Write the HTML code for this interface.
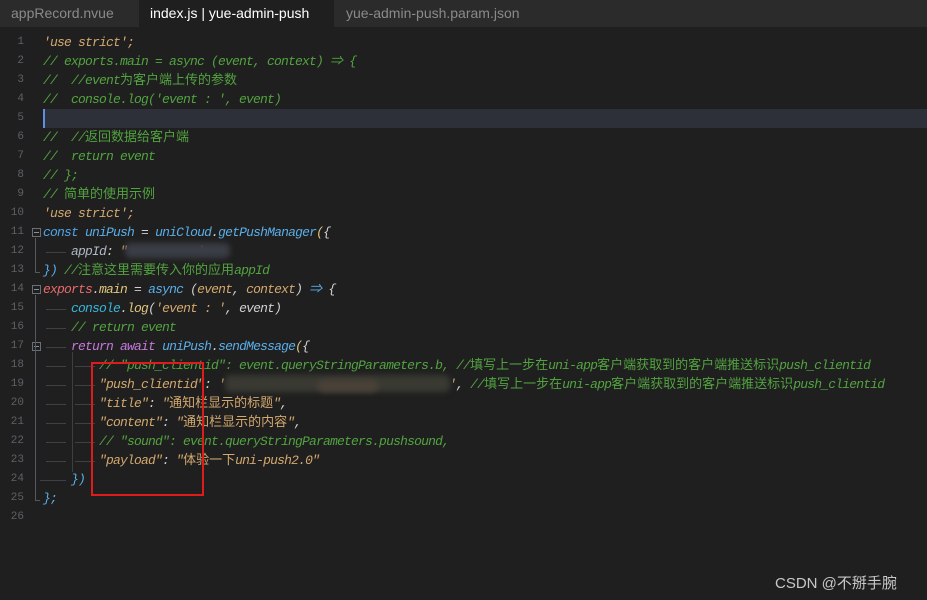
<!DOCTYPE html>
<html><head><meta charset="utf-8"><style>
body{margin:0;width:927px;height:600px;background:#1f1f1f;overflow:hidden;position:relative;font-family:"Liberation Mono","Noto Sans CJK SC",monospace;}
.tabs{position:absolute;left:0;top:0;width:927px;height:27px;background:#2b2b2b;font-family:"Liberation Sans","Noto Sans CJK SC",sans-serif;font-size:14px;}
.tab{position:absolute;top:0;height:27px;line-height:26px;color:#8a8a8a;}
.tab.act{background:#1f1f1f;color:#fff;}
.ln{position:absolute;left:0;width:24px;text-align:right;color:#5c6068;font-size:11px;height:19px;line-height:19px;}
.code{position:absolute;left:43px;height:19px;line-height:19px;font-size:13px;letter-spacing:-0.8px;white-space:pre;font-style:italic;color:#d0d0d0;}
.z{font-size:13px;letter-spacing:0;font-style:normal;}
.c{color:#52a340}.s{color:#d3a86e}.k{color:#4fa3e8}.r{color:#e86a6a}.b{color:#5aaee8}.y{color:#e0c67e}.cy{color:#38b6d8}.p{color:#c678dd}.g{color:#b0b8c6}
.fold{position:absolute;left:32px;width:7px;height:7px;border:1px solid #6a6e76;}
.fold:after{content:"";position:absolute;left:1px;top:3px;width:5px;height:1px;background:#8a8e96;}
.vg{position:absolute;width:1px;background:#55585e;}
.hg{position:absolute;height:1px;background:#3e4046;}
.blur{position:absolute;filter:blur(3px);border-radius:6px;}
</style></head><body>
<div class="tabs">
<div class="tab" style="left:0;width:138px;padding-left:11px;box-sizing:border-box">appRecord.nvue</div>
<div class="tab act" style="left:139px;width:195px;padding-left:11px;box-sizing:border-box">index.js | yue-admin-push</div>
<div class="tab" style="left:335px;width:210px;padding-left:11px;box-sizing:border-box">yue-admin-push.param.json</div>
</div>
<div style="position:absolute;left:43px;top:109px;width:884px;height:19px;background:#2d3039"></div>
<div style="position:absolute;left:43px;top:109px;width:2px;height:19px;background:#5a8ee8"></div>

<div class="ln" style="top:33px">1</div><div class="ln" style="top:52px">2</div><div class="ln" style="top:71px">3</div><div class="ln" style="top:90px">4</div><div class="ln" style="top:109px">5</div><div class="ln" style="top:128px">6</div><div class="ln" style="top:147px">7</div><div class="ln" style="top:166px">8</div><div class="ln" style="top:185px">9</div><div class="ln" style="top:204px">10</div><div class="ln" style="top:223px">11</div><div class="ln" style="top:242px">12</div><div class="ln" style="top:261px">13</div><div class="ln" style="top:280px">14</div><div class="ln" style="top:299px">15</div><div class="ln" style="top:318px">16</div><div class="ln" style="top:337px">17</div><div class="ln" style="top:356px">18</div><div class="ln" style="top:375px">19</div><div class="ln" style="top:394px">20</div><div class="ln" style="top:413px">21</div><div class="ln" style="top:432px">22</div><div class="ln" style="top:451px">23</div><div class="ln" style="top:470px">24</div><div class="ln" style="top:489px">25</div><div class="ln" style="top:508px">26</div>

<div class="fold" style="top:228px"></div><div class="fold" style="top:285px"></div><div class="fold" style="top:342px"></div>
<div class="vg" style="left:35px;top:238px;height:35px"></div><div class="hg" style="left:35px;top:272px;width:5px;background:#55585e"></div>
<div class="vg" style="left:35px;top:295px;height:206px"></div><div class="hg" style="left:35px;top:500px;width:5px;background:#55585e"></div>
<div class="vg" style="left:72px;top:352px;height:120px;background:#3c3e44"></div>
<div class="hg" style="left:46px;top:252px;width:20px"></div>
<div class="hg" style="left:46px;top:309px;width:20px"></div><div class="hg" style="left:46px;top:328px;width:20px"></div><div class="hg" style="left:46px;top:347px;width:20px"></div>
<div class="hg" style="left:46px;top:366px;width:20px"></div><div class="hg" style="left:75px;top:366px;width:20px"></div>
<div class="hg" style="left:46px;top:385px;width:20px"></div><div class="hg" style="left:75px;top:385px;width:20px"></div>
<div class="hg" style="left:46px;top:404px;width:20px"></div><div class="hg" style="left:75px;top:404px;width:20px"></div>
<div class="hg" style="left:46px;top:423px;width:20px"></div><div class="hg" style="left:75px;top:423px;width:20px"></div>
<div class="hg" style="left:46px;top:442px;width:20px"></div><div class="hg" style="left:75px;top:442px;width:20px"></div>
<div class="hg" style="left:46px;top:461px;width:20px"></div><div class="hg" style="left:75px;top:461px;width:20px"></div>
<div class="hg" style="left:40px;top:480px;width:26px"></div>

<div class="code s" style="top:33px">'use strict';</div>
<div class="code c" style="top:52px">// exports.main = async (event, context) ⇒ {</div>
<div class="code c" style="top:71px">//  //event<span class="z">为客户端上传的参数</span></div>
<div class="code c" style="top:90px">//  console.log('event : ', event)</div>
<div class="code c" style="top:128px">//  //<span class="z">返回数据给客户端</span></div>
<div class="code c" style="top:147px">//  return event</div>
<div class="code c" style="top:166px">// };</div>
<div class="code c" style="top:185px">// <span class="z">简单的使用示例</span></div>
<div class="code s" style="top:204px">'use strict';</div>
<div class="code" style="top:223px"><span class="k">const</span> <span class="b">uniPush</span> = <span class="b">uniCloud</span>.<span class="b">getPushManager</span><span class="y">(</span>{</div>
<div class="code" style="top:242px">    <span class="g">appId</span>: <span class="s">"          '</span></div>
<div class="code" style="top:261px"><span class="b">})</span> <span class="c">//<span class="z">注意这里需要传入你的应用</span>appId</span></div>
<div class="code" style="top:280px"><span class="r">exports</span>.<span class="y">main</span> = <span class="b">async</span> (<span class="s">event</span>, <span class="s">context</span>) <span class="b">⇒</span> {</div>
<div class="code" style="top:299px">    <span class="cy">console</span>.<span class="y">log</span>(<span class="s">'event : '</span>, event)</div>
<div class="code c" style="top:318px">    // return event</div>
<div class="code" style="top:337px">    <span class="p">return</span> <span class="p">await</span> <span class="b">uniPush</span>.<span class="b">sendMessage</span><span class="y">(</span>{</div>
<div class="code c" style="top:356px">        // "push_clientid": event.queryStringParameters.b, //<span class="z">填写上一步在</span>uni-app<span class="z">客户端获取到的客户端推送标识</span>push_clientid</div>
<div class="code" style="top:375px">        <span class="s">"push_clientid"</span>: <span class="s">'                                '</span>, <span class="c">//<span class="z">填写上一步在</span>uni-app<span class="z">客户端获取到的客户端推送标识</span>push_clientid</span></div>
<div class="code" style="top:394px">        <span class="s">"title"</span>: <span class="s">"<span class="z">通知栏显示的标题</span>"</span>,</div>
<div class="code" style="top:413px">        <span class="s">"content"</span>: <span class="s">"<span class="z">通知栏显示的内容</span>"</span>,</div>
<div class="code c" style="top:432px">        // "sound": event.queryStringParameters.pushsound,</div>
<div class="code" style="top:451px">        <span class="s">"payload"</span>: <span class="s">"<span class="z">体验一下</span>uni-push2.0"</span></div>
<div class="code b" style="top:470px">    })</div>
<div class="code b" style="top:489px">};</div>

<div class="blur" style="left:125px;top:243px;width:105px;height:15px;background:#3a3d45"></div>
<div class="blur" style="left:225px;top:375px;width:225px;height:17px;background:#3a3a33"></div>
<div class="blur" style="left:318px;top:380px;width:60px;height:12px;background:#4a4238"></div>

<div style="position:absolute;left:91px;top:362px;width:109px;height:130px;border:2px solid #e01b1b"></div>
<div style="position:absolute;left:775px;top:572px;font-family:'Liberation Sans','Noto Sans CJK SC',sans-serif;font-size:15px;color:#c8c8c8">CSDN @不掰手腕</div>
</body></html>
